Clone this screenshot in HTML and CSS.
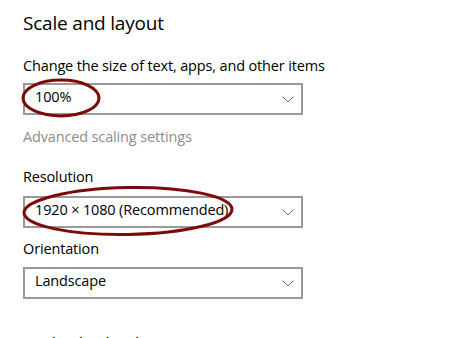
FILE: index.html
```html
<!DOCTYPE html>
<html lang="en">
<head>
  <meta charset="utf-8" />
  <title>Scale and layout</title>
  <link rel="stylesheet" href="styles.css">
</head>
<body>

<div class="page">
  <h1 class="section-title">Scale and layout</h1>

  <div class="field first">
    <div class="field-label">Change the size of text, apps, and other items</div>
    <div class="combo">
      <span>100%</span>
      <svg class="chevron" width="12" height="7" viewBox="0 0 12 7"><polyline points="0.5,0.5 6,6 11.5,0.5" fill="none" stroke="#6d6d6d" stroke-width="1"/></svg>
    </div>
  </div>

  <div class="link">Advanced scaling settings</div>

  <div class="field resolution">
    <div class="field-label">Resolution</div>
    <div class="combo">
      <span>1920 × 1080 (Recommended)</span>
      <svg class="chevron" width="12" height="7" viewBox="0 0 12 7"><polyline points="0.5,0.5 6,6 11.5,0.5" fill="none" stroke="#6d6d6d" stroke-width="1"/></svg>
    </div>
  </div>

  <div class="field orientation">
    <div class="field-label">Orientation</div>
    <div class="combo">
      <span>Landscape</span>
      <svg class="chevron" width="12" height="7" viewBox="0 0 12 7"><polyline points="0.5,0.5 6,6 11.5,0.5" fill="none" stroke="#6d6d6d" stroke-width="1"/></svg>
    </div>
  </div>

  <h2 class="section-title next">Multiple displays</h2>

  <!-- hand drawn marks over the screenshot -->
  <svg class="marks" width="452" height="338" viewBox="0 0 452 338">
    <ellipse cx="61" cy="98" rx="38" ry="18" fill="none" stroke="#7d0a0a" stroke-width="3"/>
    <ellipse cx="128" cy="211" rx="104" ry="23.5" fill="none" stroke="#7d0a0a" stroke-width="3" transform="rotate(-1 128 211)"/>
  </svg>
</div>

</body>
</html>
```

FILE: styles.css
```css
html, body {
  margin: 0;
  height: 100%;
  overflow: hidden;
  background-color: #ffffff;
}

body {
  font-family: "Open Sans", "Noto Sans", sans-serif;
  color: #000000;
}

.page {
  position: relative;
  padding: 9px 23px 0;
  display: flex;
  flex-direction: column;
}

.section-title {
  margin: 0;
  font-size: 19px;
  letter-spacing: -0.2px;
  line-height: 28px;
  font-weight: 400;
}

.section-title.next {
  margin-top: 31px;
}

.field {
  display: flex;
  flex-direction: column;
}

.field.first {
  margin-top: 19px;
}

.field.first .combo {
  margin-top: 7px;
}

.field.resolution {
  margin-top: 20px;
}

.field.resolution .combo {
  margin-top: 9px;
}

.field.orientation {
  margin-top: 11px;
}

.field.orientation .combo {
  margin-top: 8px;
}

.field-label {
  font-size: 14.5px;
  letter-spacing: -0.15px;
  line-height: 20px;
}

.combo {
  height: 28px;
  border: 2px solid #999999;
  display: flex;
  align-items: center;
  justify-content: space-between;
  padding: 0 7px 0 10px;
  box-sizing: content-box;
  width: 259px;
  font-size: 14.5px;
  letter-spacing: -0.15px;
}

.combo span {
  line-height: 22px;
  padding-bottom: 4px;
}

.chevron {
  display: block;
}

.link {
  margin-top: 12px;
  font-size: 14.5px;
  letter-spacing: -0.15px;
  line-height: 20px;
  color: #8c8c8c;
}

.marks {
  position: absolute;
  left: 0;
  top: 0;
  pointer-events: none;
}
```
